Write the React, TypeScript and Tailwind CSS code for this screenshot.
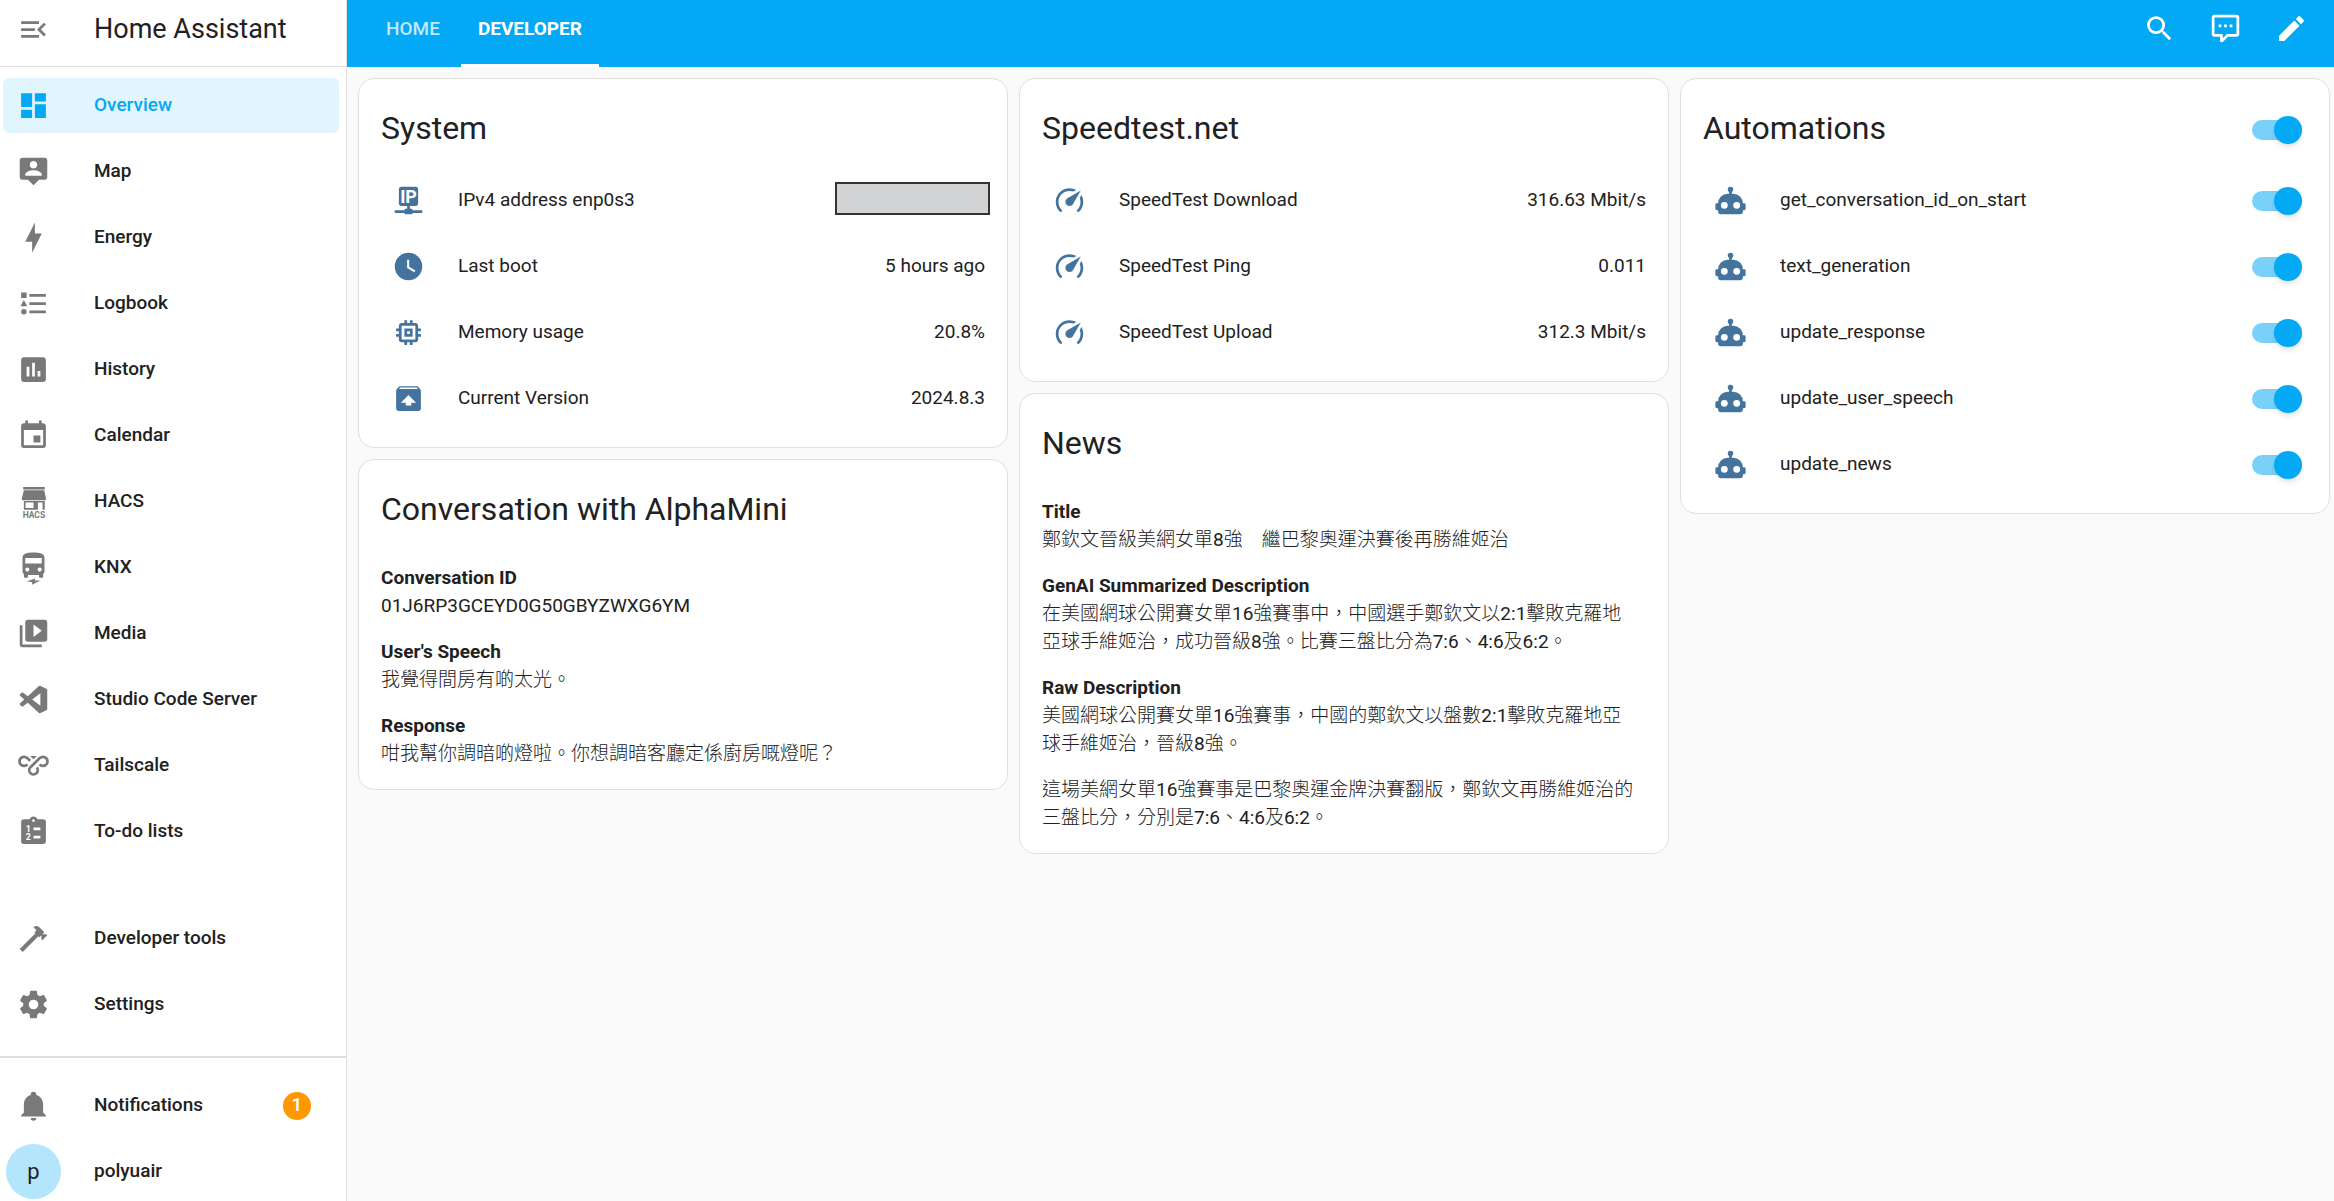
import React from "react";

type IconProps = { d: string; className?: string };

function Icon({ d, className = "" }: IconProps) {
  return (
    <svg viewBox="0 0 24 24" className={`size-[33px] shrink-0 ${className}`} fill="currentColor" aria-hidden="true">
      <path d={d} />
    </svg>
  );
}

const icons = {
  menuOpen: "M21,15.61L19.59,17L14.58,12L19.59,7L21,8.39L17.44,12L21,15.61M3,6H16V8H3V6M3,13V11H13V13H3M3,18V16H16V18H3Z",
  dashboard: "M13,3V9H21V3M13,21H21V11H13M3,21H11V15H3M3,13H11V3H3V13Z",
  map: "M20,2H4A2,2 0 0,0 2,4V16A2,2 0 0,0 4,18H8L12,22L16,18H20A2,2 0 0,0 22,16V4A2,2 0 0,0 20,2M12,4.3C13.5,4.3 14.7,5.5 14.7,7C14.7,8.5 13.5,9.7 12,9.7C10.5,9.7 9.3,8.5 9.3,7C9.3,5.5 10.5,4.3 12,4.3M18,15H6V14.1C6,12.1 10,11 12,11C14,11 18,12.1 18,14.1V15Z",
  bolt: "M11 15H6L13 1V9H18L11 23V15Z",
  logbook: "M5,9.5L7.5,14H2.5L5,9.5M3,4H7V8H3V4M5,20A2,2 0 0,0 7,18A2,2 0 0,0 5,16A2,2 0 0,0 3,18A2,2 0 0,0 5,20M9,5V7H21V5H9M9,19H21V17H9V19M9,13H21V11H9V13Z",
  chart: "M9 17H7V10H9V17M13 17H11V7H13V17M17 17H15V13H17V17M19 3H5C3.9 3 3 3.9 3 5V19C3 20.1 3.9 21 5 21H19C20.1 21 21 20.1 21 19V5C21 3.9 20.1 3 19 3Z",
  calendar: "M19,19H5V8H19M16,1V3H8V1H6V3H5C3.89,3 3,3.89 3,5V19A2,2 0 0,0 5,21H19A2,2 0 0,0 21,19V5C21,3.89 20.1,3 19,3H18V1M17,12H12V17H17V12Z",
  media: "M4,6H2V20A2,2 0 0,0 4,22H18V20H4V6M20,2H8A2,2 0 0,0 6,4V16A2,2 0 0,0 8,18H20A2,2 0 0,0 22,16V4A2,2 0 0,0 20,2M12,14.5V5.5L18,10L12,14.5Z",
  hammer: "M2,19.63L13.43,8.2L12.72,7.5L14.14,6.07L12,3.89C13.2,2.7 15.09,2.7 16.27,3.89L19.87,7.5L18.45,8.91H21.29L22,9.62L18.45,13.21L17.74,12.5V9.62L16.27,11.04L15.56,10.33L4.13,21.76L2,19.63Z",
  cog: "M12,15.5A3.5,3.5 0 0,1 8.5,12A3.5,3.5 0 0,1 12,8.5A3.5,3.5 0 0,1 15.5,12A3.5,3.5 0 0,1 12,15.5M19.43,12.97C19.47,12.65 19.5,12.33 19.5,12C19.5,11.67 19.47,11.34 19.43,11L21.54,9.37C21.73,9.22 21.78,8.95 21.66,8.73L19.66,5.27C19.54,5.05 19.27,4.96 19.05,5.05L16.56,6.05C16.04,5.66 15.5,5.32 14.87,5.07L14.5,2.42C14.46,2.18 14.25,2 14,2H10C9.75,2 9.54,2.18 9.5,2.42L9.13,5.07C8.5,5.32 7.96,5.66 7.44,6.05L4.95,5.05C4.73,4.96 4.46,5.05 4.34,5.27L2.34,8.73C2.21,8.95 2.27,9.22 2.46,9.37L4.57,11C4.53,11.34 4.5,11.67 4.5,12C4.5,12.33 4.53,12.65 4.57,12.97L2.46,14.63C2.27,14.78 2.21,15.05 2.34,15.27L4.34,18.73C4.46,18.95 4.73,19.03 4.95,18.95L7.44,17.94C7.96,18.34 8.5,18.68 9.13,18.93L9.5,21.58C9.54,21.82 9.75,22 10,22H14C14.25,22 14.46,21.82 14.5,21.58L14.87,18.93C15.5,18.67 16.04,18.34 16.56,17.94L19.05,18.95C19.27,19.03 19.54,18.95 19.66,18.73L21.66,15.27C21.78,15.05 21.73,14.78 21.54,14.63L19.43,12.97Z",
  bell: "M21,19V20H3V19L5,17V11C5,7.9 7.03,5.17 10,4.29C10,4.19 10,4.1 10,4A2,2 0 0,1 12,2A2,2 0 0,1 14,4C14,4.1 14,4.19 14,4.29C16.97,5.17 19,7.9 19,11V17L21,19M14,21A2,2 0 0,1 12,23A2,2 0 0,1 10,21",
  magnify: "M9.5,3A6.5,6.5 0 0,1 16,9.5C16,11.11 15.41,12.59 14.44,13.73L14.71,14H15.5L20.5,19L19,20.5L14,15.5V14.71L13.73,14.44C12.59,15.41 11.11,16 9.5,16A6.5,6.5 0 0,1 3,9.5A6.5,6.5 0 0,1 9.5,3M9.5,5C7,5 5,7 5,9.5C5,12 7,14 9.5,14C12,14 14,12 14,9.5C14,7 12,5 9.5,5Z",
  comment: "M9,22A1,1 0 0,1 8,21V18H4A2,2 0 0,1 2,16V4C2,2.89 2.9,2 4,2H20A2,2 0 0,1 22,4V16A2,2 0 0,1 20,18H13.9L10.2,21.71C10,21.9 9.75,22 9.5,22V22H9M10,16V19.08L13.08,16H20V4H4V16H10M17,11H15V9H17V11M13,11H11V9H13V11M9,11H7V9H9V11Z",
  pencil: "M20.71,7.04C21.1,6.65 21.1,6 20.71,5.63L18.37,3.29C18,2.9 17.35,2.9 16.96,3.29L15.12,5.12L18.87,8.87M3,17.25V21H6.75L17.81,9.93L14.06,6.18L3,17.25Z",
  clock: "M12,2A10,10 0 0,0 2,12A10,10 0 0,0 12,22A10,10 0 0,0 22,12A10,10 0 0,0 12,2M16.2,16.2L11,13V7H12.5V12.2L17,14.9L16.2,16.2Z",
  memory: "M17,17H7V7H17M21,11V9H19V7C19,5.89 18.1,5 17,5H15V3H13V5H11V3H9V5H7C5.89,5 5,5.89 5,7V9H3V11H5V13H3V15H5V17A2,2 0 0,0 7,19H9V21H11V19H13V21H15V19H17A2,2 0 0,0 19,17V15H21V13H19V11M13,13H11V11H13M15,9H9V15H15V9Z",
  packageUp: "M20.54,5.23L19.15,3.55C18.88,3.21 18.47,3 18,3H6C5.53,3 5.12,3.21 4.84,3.55L3.46,5.23C3.17,5.57 3,6 3,6.5V19A2,2 0 0,0 5,21H19A2,2 0 0,0 21,19V6.5C21,6 20.83,5.57 20.54,5.23M5.12,5L5.94,4H17.94L18.87,5M12,9.5L17.5,15H14V17H10V15H6.5L12,9.5Z",
  speedometer: "M12,16A3,3 0 0,1 9,13C9,11.88 9.61,10.9 10.5,10.39L20.21,4.77L14.68,14.35C14.18,15.33 13.17,16 12,16M12,3C13.81,3 15.5,3.5 16.97,4.32L14.87,5.53C14,5.19 13,5 12,5A8,8 0 0,0 4,13C4,15.21 4.89,17.21 6.34,18.65H6.35C6.74,19.04 6.74,19.67 6.35,20.06C5.96,20.45 5.32,20.45 4.93,20.07V20.07C3.12,18.26 2,15.76 2,13A10,10 0 0,1 12,3M22,13C22,15.76 20.88,18.26 19.07,20.07V20.07C18.68,20.45 18.05,20.45 17.66,20.06C17.27,19.67 17.27,19.04 17.66,18.65V18.65C19.11,17.2 20,15.21 20,13C20,12 19.81,11 19.46,10.1L20.67,8C21.5,9.5 22,11.18 22,13Z",
  robot: "M12,2A2,2 0 0,1 14,4C14,4.74 13.6,5.39 13,5.73V7H14A7,7 0 0,1 21,14H22A1,1 0 0,1 23,15V18A1,1 0 0,1 22,19H21V20A2,2 0 0,1 19,22H5A2,2 0 0,1 3,20V19H2A1,1 0 0,1 1,18V15A1,1 0 0,1 2,14H3A7,7 0 0,1 10,7H11V5.73C10.4,5.39 10,4.74 10,4A2,2 0 0,1 12,2M7.5,13A2.5,2.5 0 0,0 5,15.5A2.5,2.5 0 0,0 7.5,18A2.5,2.5 0 0,0 10,15.5A2.5,2.5 0 0,0 7.5,13M16.5,13A2.5,2.5 0 0,0 14,15.5A2.5,2.5 0 0,0 16.5,18A2.5,2.5 0 0,0 19,15.5A2.5,2.5 0 0,0 16.5,13Z",
};

function HacsIcon() {
  return (
    <svg viewBox="0 0 24 24" className="size-[33px] shrink-0 overflow-visible" fill="currentColor" aria-hidden="true">
      <path d="M4.5 1.5H20.2V3.2H4.5zM5 3.8H19.8L21 9.5V11H3.6V9.5z" />
      <path fillRule="evenodd" d="M5 11.6H20.2V18H18.6V12.8H15.2V18H5zM6.2 12.8V16.8H12V12.8z" />
      <text x="12.3" y="23.8" textAnchor="middle" fontSize="6.2" fontWeight="700" fontFamily="Roboto, sans-serif">HACS</text>
    </svg>
  );
}

function BusIcon() {
  return (
    <svg viewBox="0 0 24 24" className="size-[33px] shrink-0 overflow-visible" fill="currentColor" aria-hidden="true">
      <path
        fillRule="evenodd"
        d="M12 1C7.6 1 4 1.5 4 5V14.5C4 15.4 4.4 16.2 5 16.7V18.5C5 19 5.4 19.4 6 19.4H7C7.6 19.4 8 19 8 18.5V17.5H16V18.5C16 19 16.4 19.4 17 19.4H18C18.6 19.4 19 19 19 18.5V16.7C19.6 16.2 20 15.4 20 14.5V5C20 1.5 16.4 1 12 1M6 5H18V9H6zM7.5 12A1.5 1.5 0 0 1 7.5 15A1.5 1.5 0 0 1 7.5 12M16.5 12A1.5 1.5 0 0 1 16.5 15A1.5 1.5 0 0 1 16.5 12"
      />
      <path d="M7 22.2L13 20V21.5H17L11 24.6V22.6z" />
    </svg>
  );
}

function CodeIcon() {
  return (
    <svg viewBox="0 0 24 24" className="size-[33px] shrink-0" fill="currentColor" aria-hidden="true">
      <path
        transform="translate(2 2) scale(.8333)"
        d="M23.15 2.587L18.21.21a1.494 1.494 0 0 0-1.705.29l-9.46 8.63-4.12-3.128a.999.999 0 0 0-1.276.057L.327 7.261A1 1 0 0 0 .326 8.74L3.899 12 .326 15.26a1 1 0 0 0 .001 1.479L1.65 17.94a.999.999 0 0 0 1.276.057l4.12-3.128 9.46 8.63a1.492 1.492 0 0 0 1.704.29l4.942-2.377A1.5 1.5 0 0 0 24 20.06V3.939a1.5 1.5 0 0 0-.85-1.352zm-5.146 14.861L10.826 12l7.178-5.448v10.896z"
      />
    </svg>
  );
}

function VpnIcon() {
  return (
    <svg viewBox="0 0 24 24" className="size-[33px] shrink-0 overflow-visible" fill="none" stroke="currentColor" strokeWidth="2" aria-hidden="true">
      <path d="M7.6 11.2A3.3 3.3 0 1 1 7.4 6.6L9.6 8.6M16.4 11.2A3.3 3.3 0 1 0 16.6 6.6L9.8 13.2A3.1 3.1 0 1 0 14.4 13.4" />
      <path d="M9.5 5H14.5L12 7.5z" fill="currentColor" stroke="none" />
    </svg>
  );
}

function TodoIcon() {
  return (
    <svg viewBox="0 0 24 24" className="size-[33px] shrink-0" fill="currentColor" aria-hidden="true">
      <path
        fillRule="evenodd"
        d="M19 3H14.8C14.4 1.8 13.3 1 12 1S9.6 1.8 9.2 3H5A2 2 0 0 0 3 5V19A2 2 0 0 0 5 21H19A2 2 0 0 0 21 19V5A2 2 0 0 0 19 3M12 3A1 1 0 0 1 12 5A1 1 0 0 1 12 3M12 9H17V11H12zM12 15H17V17H12z"
      />
      <text x="6.4" y="12.2" fontSize="6.5" fontWeight="700" fontFamily="Roboto, sans-serif" fill="#fff">1</text>
      <text x="6.4" y="18.2" fontSize="6.5" fontWeight="700" fontFamily="Roboto, sans-serif" fill="#fff">2</text>
    </svg>
  );
}

function IpIcon() {
  return (
    <svg viewBox="0 0 24 24" className="size-[33px] shrink-0" fill="currentColor" aria-hidden="true">
      <path d="M7 2H17A2 2 0 0 1 19 4V14A2 2 0 0 1 17 16H13V18H14A1 1 0 0 1 15 19H22V21H15A1 1 0 0 1 14 22H10A1 1 0 0 1 9 21H2V19H9A1 1 0 0 1 10 18H11V16H7A2 2 0 0 1 5 14V4A2 2 0 0 1 7 2z" />
      <text x="12" y="14" textAnchor="middle" fontSize="13" fontWeight="700" fontFamily="Roboto, sans-serif" fill="#fff">IP</text>
    </svg>
  );
}

type NavItem = { label: string; icon: React.ReactNode; active?: boolean };

const mainNav: NavItem[] = [
  { label: "Overview", icon: <Icon d={icons.dashboard} />, active: true },
  { label: "Map", icon: <Icon d={icons.map} /> },
  { label: "Energy", icon: <Icon d={icons.bolt} /> },
  { label: "Logbook", icon: <Icon d={icons.logbook} /> },
  { label: "History", icon: <Icon d={icons.chart} /> },
  { label: "Calendar", icon: <Icon d={icons.calendar} /> },
  { label: "HACS", icon: <HacsIcon /> },
  { label: "KNX", icon: <BusIcon /> },
  { label: "Media", icon: <Icon d={icons.media} /> },
  { label: "Studio Code Server", icon: <CodeIcon /> },
  { label: "Tailscale", icon: <VpnIcon /> },
  { label: "To-do lists", icon: <TodoIcon /> },
];

const toolNav: NavItem[] = [
  { label: "Developer tools", icon: <Icon d={icons.hammer} /> },
  { label: "Settings", icon: <Icon d={icons.cog} /> },
];

function NavLink({ label, icon, active }: NavItem) {
  return (
    <a
      href="#"
      aria-current={active ? "page" : undefined}
      className={
        active
          ? "flex h-[55px] items-center gap-11 rounded-md bg-[#e1f5fe] pl-[14px] text-[#03a9f4]"
          : "flex h-[55px] items-center gap-11 rounded-md pl-[14px]"
      }
    >
      <span className={active ? "text-[#03a9f4]" : "text-[#797979]"}>{icon}</span>
      {label}
    </a>
  );
}

function Sidebar() {
  return (
    <aside className="flex min-h-screen w-[347px] shrink-0 flex-col border-r border-[#e0e0e0] bg-white text-[19px] font-medium">
      <div className="flex h-[67px] items-center gap-11 border-b border-[#e0e0e0] pb-2 pl-[17px]">
        <button type="button" aria-label="Sidebar toggle" className="text-[#797979]">
          <Icon d={icons.menuOpen} />
        </button>
        <span className="text-[27px] font-normal">Home Assistant</span>
      </div>
      <nav className="flex grow flex-col gap-[11px] pt-[11px] pr-[7px] pl-[3px]">
        {mainNav.map((item) => (
          <NavLink key={item.label} {...item} />
        ))}
        <div className="grow" />
        {toolNav.map((item) => (
          <NavLink key={item.label} {...item} />
        ))}
      </nav>
      <div className="mt-6 flex flex-col gap-[11px] border-t-2 border-[#e0e0e0] pt-5 pr-[7px] pb-[2px] pl-[3px]">
        <a href="#" className="flex h-[55px] items-center gap-11 pr-7 pl-[14px]">
          <Icon d={icons.bell} className="text-[#797979]" />
          <span className="grow">Notifications</span>
          <span className="flex size-7 items-center justify-center rounded-full bg-[#ff9800] text-white">1</span>
        </a>
        <a href="#" className="flex h-[55px] items-center gap-[33px] pl-[3px]">
          <span className="flex size-[55px] items-center justify-center rounded-full bg-[#b3e5fc] text-[22px] font-normal">p</span>
          polyuair
        </a>
      </div>
    </aside>
  );
}

function TopBar() {
  return (
    <header className="flex h-[67px] items-stretch justify-between bg-[#03a9f4] pr-[10px] pl-[22px] text-white">
      <nav className="flex gap-1 text-[19px] font-medium">
        <a href="#" className="px-[17px] pt-[15px] text-white/75">HOME</a>
        <a href="#" aria-current="page" className="border-b-3 border-white px-[17px] pt-[15px] font-bold">DEVELOPER</a>
      </nav>
      <div className="flex items-center pb-[10px]">
        <button type="button" aria-label="Search" className="flex w-[66px] justify-center">
          <Icon d={icons.magnify} />
        </button>
        <button type="button" aria-label="Assist" className="flex w-[66px] justify-center">
          <Icon d={icons.comment} />
        </button>
        <button type="button" aria-label="Edit dashboard" className="flex w-[66px] justify-center">
          <Icon d={icons.pencil} />
        </button>
      </div>
    </header>
  );
}

function Card({ title, action, children }: { title: string; action?: React.ReactNode; children: React.ReactNode }) {
  return (
    <section className="rounded-2xl border border-[#e0e0e0] bg-white px-[22px] pt-4 pb-[21px]">
      <div className="flex items-center justify-between">
        <h2 className="text-[32px] leading-[66px]">{title}</h2>
        {action && <div className="flex pt-1">{action}</div>}
      </div>
      {children}
    </section>
  );
}

function Rows({ children }: { children: React.ReactNode }) {
  return <ul className="flex flex-col gap-[11px] pt-3">{children}</ul>;
}

function Row({ icon, name, children }: { icon: React.ReactNode; name: string; children: React.ReactNode }) {
  return (
    <li className="flex h-[55px] items-center gap-[22px]">
      <span className="flex w-[55px] shrink-0 justify-center text-[#44739e]">{icon}</span>
      <span className="grow">{name}</span>
      {children}
    </li>
  );
}

function Toggle({ label }: { label: string }) {
  return (
    <input
      type="checkbox"
      defaultChecked
      aria-label={label}
      className="relative mr-[5px] h-5 w-[50px] shrink-0 appearance-none rounded-full bg-[#79d1f9] before:absolute before:-top-1 before:right-0 before:size-7 before:rounded-full before:bg-[#03a9f4] before:shadow-md before:content-['']"
    />
  );
}

function Entry({ title, children }: { title: string; children: React.ReactNode }) {
  return (
    <p>
      <strong className="block font-bold">{title}</strong>
      {children}
    </p>
  );
}

function Prose({ children }: { children: React.ReactNode }) {
  return (
    <div className="flex flex-col gap-[18px] pt-[22px] pr-[10px] font-['Roboto','Noto_Sans_CJK_TC_Light','Noto_Sans_CJK_TC_DemiLight','Noto_Sans_CJK_TC',sans-serif] leading-7">
      {children}
    </div>
  );
}

const automations = [
  "get_conversation_id_on_start",
  "text_generation",
  "update_response",
  "update_user_speech",
  "update_news",
];

export default function App() {
  return (
    <div className="flex min-h-screen bg-[#fafafa] font-['Roboto','Noto_Sans_CJK_TC',sans-serif] text-[19px] text-[#212121]" lang="zh-Hant">
      <Sidebar />
      <div className="flex min-w-0 grow flex-col">
        <TopBar />
        <main className="grid grid-cols-3 items-start gap-[11px] pt-[11px] pr-1 pl-[11px]">
          <div className="flex flex-col gap-[11px]">
            <Card title="System">
              <Rows>
                <Row icon={<IpIcon />} name="IPv4 address enp0s3">
                  <span className="-mr-[5px] mb-1 h-[33px] w-[155px] border-2 border-[#333333] bg-[#d1d3d4]" />
                </Row>
                <Row icon={<Icon d={icons.clock} />} name="Last boot">5 hours ago</Row>
                <Row icon={<Icon d={icons.memory} />} name="Memory usage">20.8%</Row>
                <Row icon={<Icon d={icons.packageUp} />} name="Current Version">2024.8.3</Row>
              </Rows>
            </Card>
            <Card title="Conversation with AlphaMini">
              <Prose>
                <Entry title="Conversation ID">01J6RP3GCEYD0G50GBYZWXG6YM</Entry>
                <Entry title="User's Speech">我覺得間房有啲太光。</Entry>
                <Entry title="Response">咁我幫你調暗啲燈啦。你想調暗客廳定係廚房嘅燈呢？</Entry>
              </Prose>
            </Card>
          </div>
          <div className="flex flex-col gap-[11px]">
            <Card title="Speedtest.net">
              <Rows>
                <Row icon={<Icon d={icons.speedometer} />} name="SpeedTest Download">316.63 Mbit/s</Row>
                <Row icon={<Icon d={icons.speedometer} />} name="SpeedTest Ping">0.011</Row>
                <Row icon={<Icon d={icons.speedometer} />} name="SpeedTest Upload">312.3 Mbit/s</Row>
              </Rows>
            </Card>
            <Card title="News">
              <Prose>
                <Entry title="Title">鄭欽文晉級美網女單8強　繼巴黎奧運決賽後再勝維姬治</Entry>
                <Entry title="GenAI Summarized Description">
                  在美國網球公開賽女單16強賽事中，中國選手鄭欽文以2:1擊敗克羅地亞球手維姬治，成功晉級8強。比賽三盤比分為7:6、4:6及6:2。
                </Entry>
                <Entry title="Raw Description">
                  美國網球公開賽女單16強賽事，中國的鄭欽文以盤數2:1擊敗克羅地亞球手維姬治，晉級8強。
                </Entry>
                <p>這場美網女單16強賽事是巴黎奧運金牌決賽翻版，鄭欽文再勝維姬治的三盤比分，分別是7:6、4:6及6:2。</p>
              </Prose>
            </Card>
          </div>
          <Card title="Automations" action={<Toggle label="Automations" />}>
            <Rows>
              {automations.map((name) => (
                <Row key={name} icon={<Icon d={icons.robot} />} name={name}>
                  <Toggle label={name} />
                </Row>
              ))}
            </Rows>
          </Card>
        </main>
      </div>
    </div>
  );
}
